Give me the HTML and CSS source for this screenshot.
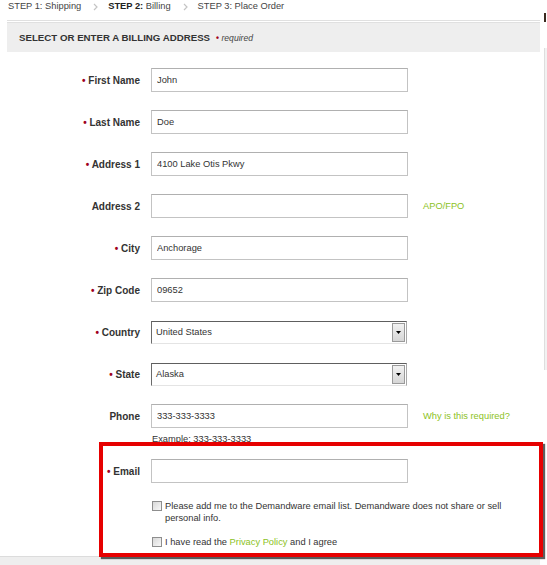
FILE: index.html
```html
<!DOCTYPE html>
<html lang="en">
<head>
<meta charset="utf-8">
<title>Billing</title>
<link rel="stylesheet" href="styles.css">
</head>
<body>
<div class="page">
  <div class="main">
    <nav class="steps">
      <span class="step">STEP 1: Shipping</span>
      <svg class="chev" width="5" height="8" viewBox="0 0 5 8"><path d="M1 1l3 3-3 3" fill="none" stroke="#c4c4c4" stroke-width="1.2"/></svg>
      <span class="step current"><b>STEP 2:</b> Billing</span>
      <svg class="chev" width="5" height="8" viewBox="0 0 5 8"><path d="M1 1l3 3-3 3" fill="none" stroke="#c4c4c4" stroke-width="1.2"/></svg>
      <span class="step">STEP 3: Place Order</span>
    </nav>

    <section class="panel">
      <div class="panel-rule"></div>
      <h2 class="panel-head">SELECT OR ENTER A BILLING ADDRESS <span class="req"><span class="dot">&bull;</span> required</span></h2>

      <form class="form">
        <div class="row">
          <label class="label"><span class="dot">&bull;</span> First Name</label>
          <input class="field" type="text" value="John">
        </div>
        <div class="row">
          <label class="label"><span class="dot">&bull;</span> Last Name</label>
          <input class="field" type="text" value="Doe">
        </div>
        <div class="row">
          <label class="label"><span class="dot">&bull;</span> Address 1</label>
          <input class="field" type="text" value="4100 Lake Otis Pkwy">
        </div>
        <div class="row">
          <label class="label">Address 2</label>
          <input class="field" type="text" value="">
          <a class="note">APO/FPO</a>
        </div>
        <div class="row">
          <label class="label"><span class="dot">&bull;</span> City</label>
          <input class="field" type="text" value="Anchorage">
        </div>
        <div class="row">
          <label class="label"><span class="dot">&bull;</span> Zip Code</label>
          <input class="field" type="text" value="09652">
        </div>
        <div class="row">
          <label class="label"><span class="dot">&bull;</span> Country</label>
          <div class="select"><span class="select-text">United States</span><span class="select-btn"><svg width="5" height="3" viewBox="0 0 5 3"><path d="M0 0h5L2.5 3z" fill="#000"/></svg></span></div>
        </div>
        <div class="row">
          <label class="label"><span class="dot">&bull;</span> State</label>
          <div class="select"><span class="select-text">Alaska</span><span class="select-btn"><svg width="5" height="3" viewBox="0 0 5 3"><path d="M0 0h5L2.5 3z" fill="#000"/></svg></span></div>
        </div>
        <div class="row">
          <label class="label">Phone</label>
          <input class="field" type="text" value="333-333-3333">
          <a class="note">Why is this required?</a>
        </div>
        <div class="example">Example: 333-333-3333</div>
        <div class="row row-email">
          <label class="label"><span class="dot">&bull;</span> Email</label>
          <input class="field" type="text" value="">
        </div>
        <div class="check check-first">
          <input type="checkbox" class="box">
          <span class="check-text">Please add me to the Demandware email list. Demandware does not share or sell personal info.</span>
        </div>
        <div class="check">
          <input type="checkbox" class="box">
          <span class="check-text">I have read the <a class="link">Privacy Policy</a> and I agree</span>
        </div>
      </form>
    </section>
    <div class="next-head"></div>
  </div>
  <aside class="aside">
    <span class="mark mark-top"></span>
    <span class="aside-line"></span>
  </aside>
  <div class="highlight"></div>
</div>
</body>
</html>
```

FILE: styles.css
```css
html, body {
  margin: 0;
  padding: 0;
  background: #fff;
}
body {
  font-family: "Liberation Sans", Arial, sans-serif;
  color: #333;
  font-size: 9.3px;
}
.page {
  position: relative;
  width: 547px;
  height: 565px;
  overflow: hidden;
  display: flex;
}
.main {
  width: 540px;
  flex: none;
}
.steps {
  display: flex;
  align-items: center;
  height: 13px;
  padding-left: 8px;
  color: #444;
  font-size: 9.3px;
  line-height: 13px;
}
.chev {
  margin: 0 10px 0 12px;
}
.step.current b {
  color: #222;
}
.panel {
  margin-left: 7px;
  margin-top: 7px;
}
.panel-rule {
  height: 1px;
  background: #e0e0e0;
  margin-bottom: 1px;
}
.panel-head {
  margin: 0;
  height: 29px;
  border-top: 1px solid #e0e0e0;
  background: #eeeeee;
  padding-left: 12px;
  display: flex;
  align-items: center;
  font-size: 9.7px;
  font-weight: bold;
  color: #333;
}
.req {
  font-weight: normal;
  font-style: italic;
  font-size: 8.6px;
  margin-left: 6px;
  color: #444;
}
.dot {
  color: #a0001c;
  font-style: normal;
  font-weight: bold;
}
.form {
  padding-top: 16px;
}
.row {
  display: flex;
  align-items: center;
  height: 24px;
  margin-bottom: 18px;
}
.label {
  width: 133px;
  flex: none;
  text-align: right;
  font-weight: bold;
  font-size: 10px;
  color: #333;
  margin-right: 11px;
}
.field {
  box-sizing: border-box;
  width: 257px;
  height: 24px;
  margin: 0;
  border: 1px solid #c3c3c3;
  border-top-color: #b0b0b0;
  padding: 0 5px;
  font-family: "Liberation Sans", Arial, sans-serif;
  font-size: 9.3px;
  color: #333;
  background: #fff;
  outline: none;
}
.note {
  margin-left: 15px;
  color: #8cc224;
  font-size: 9.3px;
}
.select {
  box-sizing: border-box;
  width: 256px;
  height: 23px;
  display: flex;
  align-items: stretch;
  border: 1px solid #a8a8a8;
  border-top-color: #5e5e5e;
  border-left-color: #6a6a6a;
  border-bottom-color: #e4e4e4;
  background: #fff;
}
.select-text {
  flex: 1;
  display: flex;
  align-items: center;
  padding-left: 4px;
  font-size: 9.3px;
  color: #333;
}
.select-btn {
  width: 11px;
  margin: 1px 1px 1px 0;
  display: flex;
  align-items: center;
  justify-content: center;
  border: 1px solid #9a9a9a;
  background: linear-gradient(#f2f2f2, #d6d6d6);
}
.example {
  margin-top: -13px;
  margin-left: 145px;
  line-height: 12px;
  font-size: 9.3px;
  color: #333;
}
.row-email {
  margin-top: 14px;
  margin-bottom: 0;
}
.check {
  display: flex;
  align-items: flex-start;
  margin-left: 145px;
  width: 380px;
  line-height: 12px;
  margin-top: 12px;
}
.check-first {
  margin-top: 17px;
}
.box {
  appearance: none;
  -webkit-appearance: none;
  box-sizing: border-box;
  width: 10px;
  height: 10px;
  margin: 1px 3px 0 0;
  flex: none;
  border: 1px solid #8e8e8e;
  background: linear-gradient(135deg, #d8d8d8, #f8f8f8);
}
.check-text {
  font-size: 9.3px;
  color: #333;
}
.link {
  color: #8cc224;
}
.next-head {
  position: relative;
  margin-top: 8px;
  margin-left: -7px;
  width: 547px;
  height: 10px;
  border-top: 1px solid #dcdcdc;
  background: #eeeeee;
}
.aside {
  width: 3px;
  margin-left: 4px;
  display: flex;
  flex-direction: column;
}
.mark {
  display: block;
  width: 2px;
  height: 9px;
  margin-top: 13px;
  background: #3a2a20;
}
.aside-line {
  display: block;
  margin-top: 26px;
  height: 322px;
  border-left: 1px solid #dedede;
  background: #f2f2f2;
}
.highlight {
  position: absolute;
  left: 99px;
  top: 442px;
  width: 444px;
  height: 115px;
  box-sizing: border-box;
  border: 4px solid #e60000;
  box-shadow: 2px 2px 1px rgba(40, 40, 40, 0.75);
  pointer-events: none;
}
```
